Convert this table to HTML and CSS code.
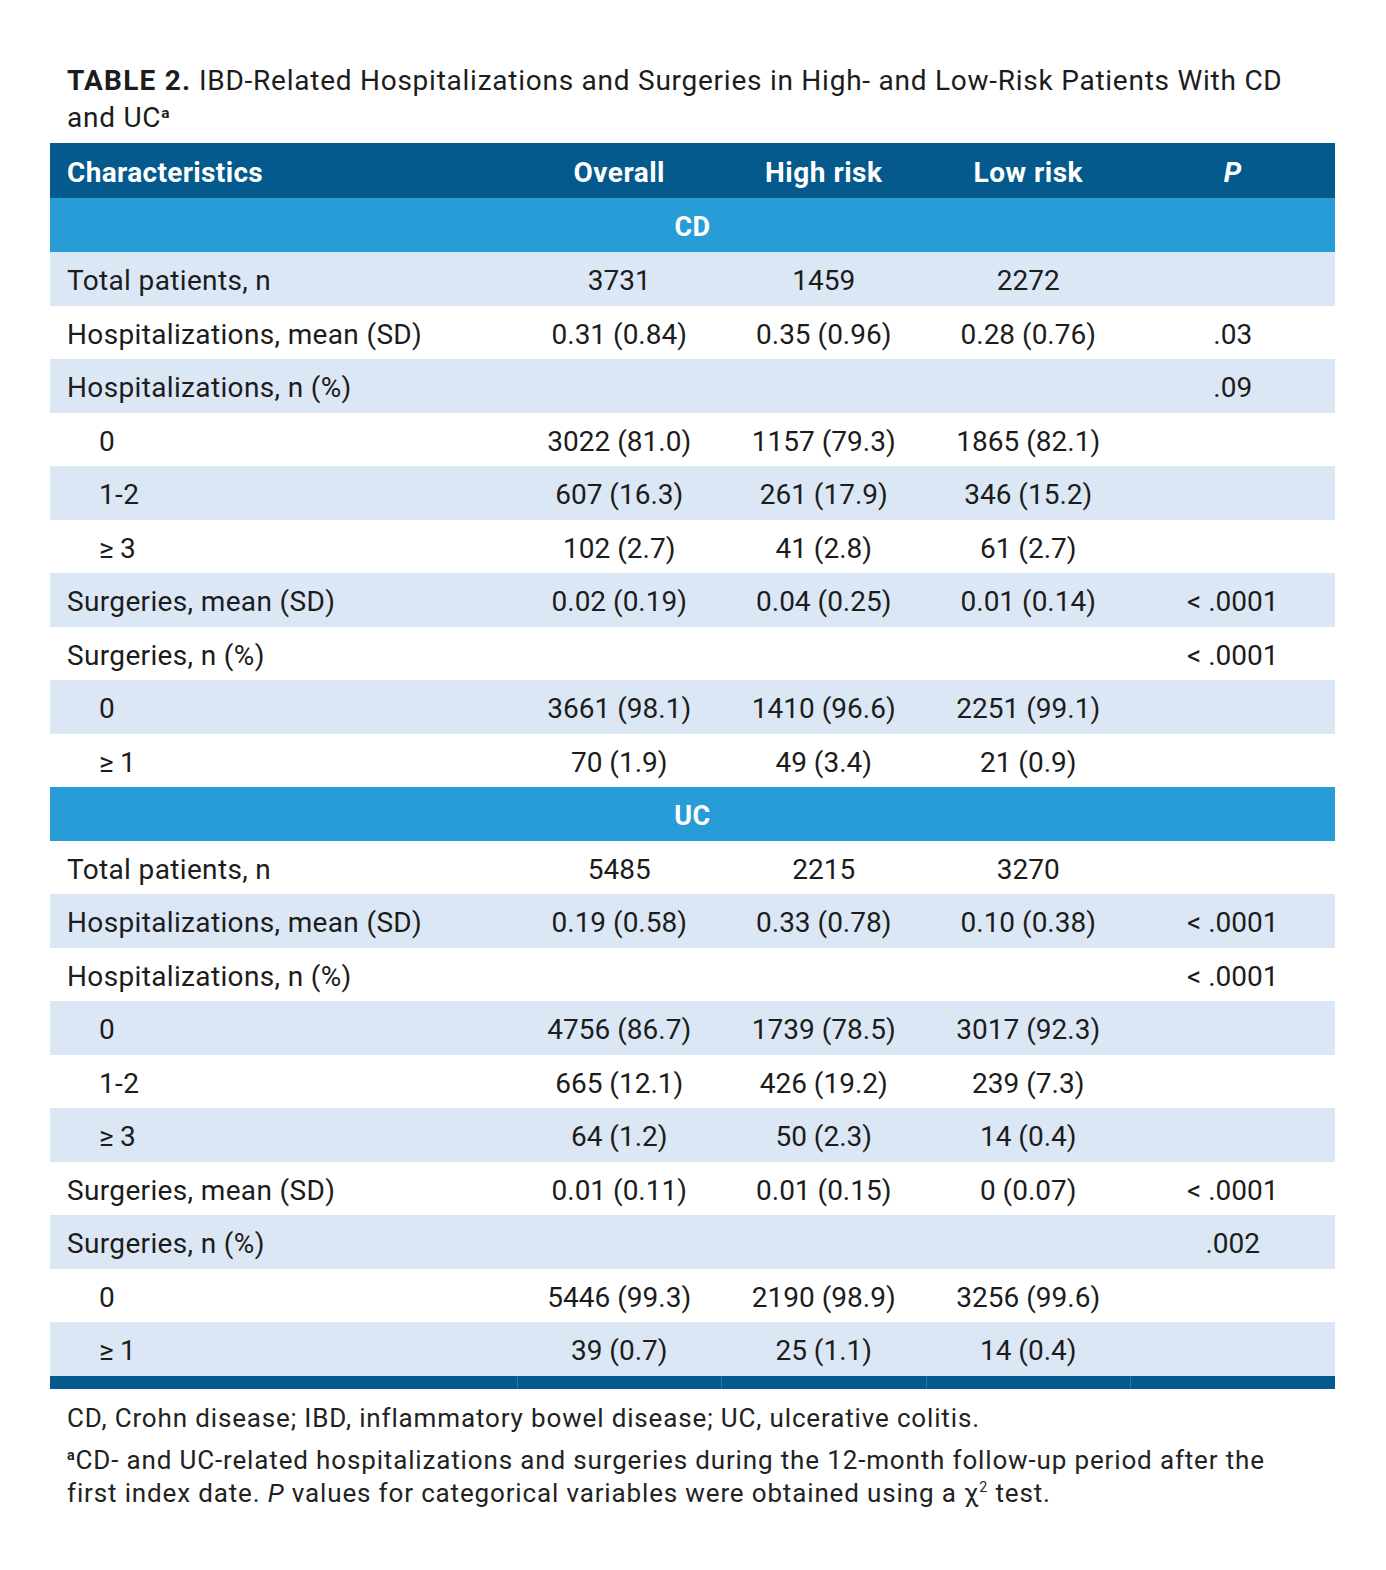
FILE: index.html
```html
<!DOCTYPE html>
<html lang="en">
<head>
<meta charset="utf-8">
<title>Table 2</title>
<link rel="stylesheet" href="styles.css">
</head>
<body>
<div class="page">
  <h1 class="caption"><b>TABLE 2.</b> IBD-Related Hospitalizations and Surgeries in High- and Low-Risk Patients With CD and UC<sup class="sup-a">a</sup></h1>
  <table class="data">
    <thead>
      <tr class="head">
        <th class="c1">Characteristics</th>
        <th>Overall</th>
        <th>High risk</th>
        <th>Low risk</th>
        <th><i>P</i></th>
      </tr>
    </thead>
    <tbody>
      <tr class="group"><td colspan="5">CD</td></tr>
      <tr class="alt"><td class="c1">Total patients, n</td><td>3731</td><td>1459</td><td>2272</td><td></td></tr>
      <tr><td class="c1">Hospitalizations, mean (SD)</td><td>0.31 (0.84)</td><td>0.35 (0.96)</td><td>0.28 (0.76)</td><td>.03</td></tr>
      <tr class="alt"><td class="c1">Hospitalizations, n (%)</td><td></td><td></td><td></td><td>.09</td></tr>
      <tr><td class="c1 sub">0</td><td>3022 (81.0)</td><td>1157 (79.3)</td><td>1865 (82.1)</td><td></td></tr>
      <tr class="alt"><td class="c1 sub">1-2</td><td>607 (16.3)</td><td>261 (17.9)</td><td>346 (15.2)</td><td></td></tr>
      <tr><td class="c1 sub">≥&#8201;3</td><td>102 (2.7)</td><td>41 (2.8)</td><td>61 (2.7)</td><td></td></tr>
      <tr class="alt"><td class="c1">Surgeries, mean (SD)</td><td>0.02 (0.19)</td><td>0.04 (0.25)</td><td>0.01 (0.14)</td><td>&lt; .0001</td></tr>
      <tr><td class="c1">Surgeries, n (%)</td><td></td><td></td><td></td><td>&lt; .0001</td></tr>
      <tr class="alt"><td class="c1 sub">0</td><td>3661 (98.1)</td><td>1410 (96.6)</td><td>2251 (99.1)</td><td></td></tr>
      <tr><td class="c1 sub">≥&#8201;1</td><td>70 (1.9)</td><td>49 (3.4)</td><td>21 (0.9)</td><td></td></tr>
      <tr class="group"><td colspan="5">UC</td></tr>
      <tr><td class="c1">Total patients, n</td><td>5485</td><td>2215</td><td>3270</td><td></td></tr>
      <tr class="alt"><td class="c1">Hospitalizations, mean (SD)</td><td>0.19 (0.58)</td><td>0.33 (0.78)</td><td>0.10 (0.38)</td><td>&lt; .0001</td></tr>
      <tr><td class="c1">Hospitalizations, n (%)</td><td></td><td></td><td></td><td>&lt; .0001</td></tr>
      <tr class="alt"><td class="c1 sub">0</td><td>4756 (86.7)</td><td>1739 (78.5)</td><td>3017 (92.3)</td><td></td></tr>
      <tr><td class="c1 sub">1-2</td><td>665 (12.1)</td><td>426 (19.2)</td><td>239 (7.3)</td><td></td></tr>
      <tr class="alt"><td class="c1 sub">≥&#8201;3</td><td>64 (1.2)</td><td>50 (2.3)</td><td>14 (0.4)</td><td></td></tr>
      <tr><td class="c1">Surgeries, mean (SD)</td><td>0.01 (0.11)</td><td>0.01 (0.15)</td><td>0 (0.07)</td><td>&lt; .0001</td></tr>
      <tr class="alt"><td class="c1">Surgeries, n (%)</td><td></td><td></td><td></td><td>.002</td></tr>
      <tr><td class="c1 sub">0</td><td>5446 (99.3)</td><td>2190 (98.9)</td><td>3256 (99.6)</td><td></td></tr>
      <tr class="alt"><td class="c1 sub">≥&#8201;1</td><td>39 (0.7)</td><td>25 (1.1)</td><td>14 (0.4)</td><td></td></tr>
    </tbody>
    <tfoot>
      <tr class="bar"><td class="c1"></td><td></td><td></td><td></td><td></td></tr>
    </tfoot>
  </table>
  <div class="notes">
    <p>CD, Crohn disease; IBD, inflammatory bowel disease; UC, ulcerative colitis.</p>
    <p><sup class="sup-a">a</sup>CD- and UC-related hospitalizations and surgeries during the 12-month follow-up period after the first index date. <i>P</i> values for categorical variables were obtained using a χ<sup class="sup2">2</sup> test.</p>
  </div>
</div>
</body>
</html>
```
FILE: styles.css
```css
html, body {
  margin: 0;
  padding: 0;
  background: #ffffff;
}
.page {
  width: 1285px;
  padding: 62px 0 0 50px;
  font-family: Roboto, "Liberation Sans", sans-serif;
  color: #1c1c1c;
}
.caption {
  width: 1230px;
  margin: 0 0 7px 0;
  padding: 0 0 0 17px;
  font-size: 28px;
  font-weight: 400;
  line-height: 37px;
  letter-spacing: 0.75px;
}
.caption b {
  font-weight: 700;
  letter-spacing: 1.2px;
}
.sup-a {
  font-size: 0.55em;
  font-weight: 700;
  vertical-align: 0.6em;
  line-height: 0;
}
.data {
  width: 1285px;
  border-collapse: collapse;
  table-layout: fixed;
  font-size: 28px;
}
.data th,
.data td {
  padding: 3px 0 0 0;
  text-align: center;
  white-space: nowrap;
}
.data th.c1,
.data td.c1 {
  width: 450px;
  padding-left: 17px;
  text-align: left;
  letter-spacing: 0.35px;
}
.data td.sub {
  padding-left: 49px;
}
.head {
  height: 55px;
  background: #045a8d;
  color: #ffffff;
}
.head th {
  font-weight: 700;
  font-size: 28px;
  letter-spacing: 0.5px;
}
.group td {
  font-weight: 700;
  font-size: 27px;
  letter-spacing: 0.5px;
}
.data tbody tr {
  height: 53px;
}
.data tbody tr.alt {
  height: 54px;
  background: #dce7f5;
}
.data tbody tr.group {
  height: 54px;
  background: #279cd7;
  color: #ffffff;
}
.bar {
  height: 13px;
  background: #045a8d;
}
.data .bar td {
  padding: 0;
  border-left: 1px solid #2a77a8;
}
.data .bar td.c1 {
  border-left: none;
}
.notes {
  width: 1233px;
  margin-top: 13px;
  padding-left: 17px;
  font-size: 26px;
  line-height: 33px;
  color: #222222;
  letter-spacing: 0.85px;
}
.notes p {
  margin: 0 0 9px 0;
}
.sup2 {
  font-size: 0.55em;
  vertical-align: 0.7em;
  line-height: 0;
}
```
